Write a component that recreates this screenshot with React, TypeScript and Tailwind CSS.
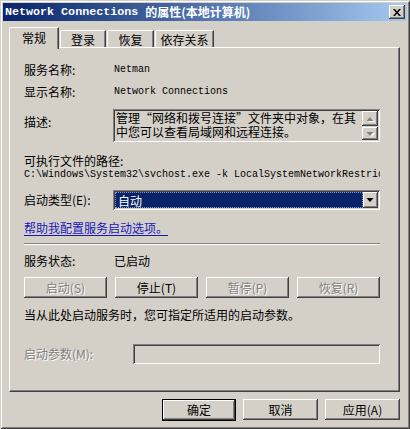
import React from "react";

const raised =
  "shadow-[inset_-1px_-1px_#404040,inset_1px_1px_#ffffff,inset_-2px_-2px_#808080,inset_2px_2px_#d4d0c8]";
const sunken =
  "shadow-[inset_1px_1px_#808080,inset_-1px_-1px_#ffffff,inset_2px_2px_#404040,inset_-2px_-2px_#d4d0c8]";
const disabledText = "text-[#808080] [text-shadow:1px_1px_0_#ffffff]";
const mono = "font-['Liberation_Mono',monospace] text-[10px]";

function Btn({
  children,
  disabled,
  w,
  isDefault,
}: {
  children: React.ReactNode;
  disabled?: boolean;
  w: string;
  isDefault?: boolean;
}) {
  if (isDefault) {
    return (
      <div className={`${w} h-[22px] border border-black flex`}>
        <div className={`flex-1 flex items-center justify-center ${raised}`}>
          <span className="text-[12px] leading-[14px]">{children}</span>
        </div>
      </div>
    );
  }
  return (
    <div className={`${w} h-[21px] flex items-center justify-center ${raised}`}>
      <span className={`text-[12px] leading-[14px] ${disabled ? disabledText : ""}`}>{children}</span>
    </div>
  );
}

function Tab({ label, selected, w }: { label: string; selected?: boolean; w: string }) {
  if (selected) {
    return (
      <div
        className={`${w} h-[22px] -mb-[2px] relative z-10 bg-[#d4d0c8] border-l border-t border-white border-r border-r-[#404040] rounded-tl-[2px] shadow-[inset_-1px_0_#808080] flex justify-center pt-[2px]`}
      >
        <span className="text-[12px] leading-[16px]">{label}</span>
      </div>
    );
  }
  return (
    <div
      className={`${w} h-[17px] bg-[#d4d0c8] border-l border-t border-white border-r border-r-[#404040] rounded-tl-[2px] shadow-[inset_-1px_0_#808080] flex justify-center pt-[1px]`}
    >
      <span className="text-[12px] leading-[16px]">{label}</span>
    </div>
  );
}

function Arrow({ up, color = "#808080", shadow }: { up?: boolean; color?: string; shadow?: boolean }) {
  return (
    <svg width="9" height="6" viewBox="0 0 9 6">
      {shadow && (
        <polygon
          points={up ? "4.5,1 8,5 1,5" : "1,1 8,1 4.5,5"}
          fill="#ffffff"
          transform="translate(1,1)"
        />
      )}
      <polygon points={up ? "4,1 7.5,5 0.5,5" : "0.5,1 7.5,1 4,5"} fill={color} />
    </svg>
  );
}

export default function App() {
  return (
    <div
      className={`w-[410px] h-[429px] bg-[#d4d0c8] text-black font-['Noto_Sans_CJK_SC','Noto_Sans',sans-serif] shadow-[inset_1px_1px_#d4d0c8,inset_-1px_-1px_#404040,inset_2px_2px_#ffffff,inset_-2px_-2px_#808080] pt-[3px] overflow-hidden`}
    >
      {/* Title bar */}
      <div className="mx-[3px] h-[18px] bg-gradient-to-r from-[#0a246a] to-[#a6caf0] flex items-center justify-between pl-[2px] pr-[2px]">
        <div className="flex items-center text-white font-bold whitespace-nowrap">
          <span className="font-['Liberation_Mono',monospace] text-[11.7px] leading-[14px] tracking-[0px]">
            Network Connections
          </span>
          <span className="text-[12px] leading-[14px] ml-[7px]">的属性(本地计算机)</span>
        </div>
        <div className={`w-[16px] h-[14px] bg-[#d4d0c8] ${raised} flex items-center justify-center`}>
          <svg width="8" height="7" viewBox="0 0 8 7">
            <path d="M0 0h2l2 2.5L6 0h2L5 3.5 8 7H6L4 4.5 2 7H0l3-3.5z" fill="#000" />
          </svg>
        </div>
      </div>

      {/* Tabs */}
      <div className="ml-[9px] mt-[6px] h-[20px] flex items-end">
        <Tab label="常规" selected w="w-[50px]" />
        <Tab label="登录" w="w-[46px] ml-[1px]" />
        <Tab label="恢复" w="w-[47px] ml-[1px]" />
        <Tab label="依存关系" w="w-[59px] ml-[1px]" />
      </div>

      {/* Panel */}
      <div className="ml-[9px] w-[391px] h-[345px] border-l border-t border-white border-r border-b border-r-[#404040] border-b-[#404040] shadow-[inset_-1px_-1px_#808080] pl-[14px] pr-[19px] pt-[14px]">
        <div className="flex h-[16px] items-center">
          <span className="w-[90px] text-[12px] leading-[16px]">服务名称:</span>
          <span className={`${mono} leading-[16px]`}>Netman</span>
        </div>
        <div className="flex h-[16px] items-center mt-[6px]">
          <span className="w-[90px] text-[12px] leading-[16px]">显示名称:</span>
          <span className={`${mono} leading-[16px]`}>Network Connections</span>
        </div>

        <div className="flex mt-[9px]">
          <span className="w-[89px] text-[12px] leading-[16px] pt-[5px]">描述:</span>
          <div className={`flex-1 h-[33px] bg-[#d4d0c8] ${sunken} flex py-[2px] pl-[2px] pr-[2px]`}>
            <div className="flex-1 flex flex-col text-[12px] leading-[14px] whitespace-nowrap pl-[1px]">
              <span>管理“网络和拨号连接”文件夹中对象，在其</span>
              <span>中您可以查看局域网和远程连接。</span>
            </div>
            <div className="w-[16px] flex flex-col">
              <div className={`h-[15px] ${raised} flex items-center justify-center`}>
                <Arrow up shadow />
              </div>
              <div className="h-[1px]" />
              <div className={`h-[13px] ${raised} flex items-center justify-center`}>
                <Arrow shadow />
              </div>
            </div>
          </div>
        </div>

        <div className="mt-[12px] h-[14px] text-[12px] leading-[14px]">可执行文件的路径:</div>
        <div className={`h-[13px] ${mono} leading-[13px] whitespace-nowrap overflow-hidden`}>
          C:\Windows\System32\svchost.exe -k LocalSystemNetworkRestricted
        </div>

        <div className="flex items-center mt-[9px]">
          <span className="w-[89px] text-[12px] leading-[16px]">启动类型(E):</span>
          <div className={`flex-1 h-[20px] bg-white ${sunken} flex p-[2px]`}>
            <div className="flex-1 bg-[#0a246a] text-white text-[12px] leading-[16px] pl-[2px] border border-dotted border-[#8a9ac8]">
              自动
            </div>
            <div className={`w-[15px] bg-[#d4d0c8] ${raised} flex items-center justify-center`}>
              <Arrow color="#000000" />
            </div>
          </div>
        </div>

        <div className="mt-[10px] h-[16px] text-[12px] leading-[16px]">
          <span className="text-[#1818c0] underline underline-offset-[2px]">帮助我配置服务启动选项。</span>
        </div>

        <div className="mt-[7px] h-[2px] border-t border-t-[#808080] border-b border-b-white" />

        <div className="flex h-[16px] items-center mt-[8px]">
          <span className="w-[90px] text-[12px] leading-[16px]">服务状态:</span>
          <span className="text-[12px] leading-[16px]">已启动</span>
        </div>

        <div className="flex gap-[8px] mt-[8px]">
          <Btn w="w-[83px]" disabled>
            启动(S)
          </Btn>
          <Btn w="w-[83px]">停止(T)</Btn>
          <Btn w="w-[83px]" disabled>
            暂停(P)
          </Btn>
          <Btn w="w-[83px]" disabled>
            恢复(R)
          </Btn>
        </div>

        <div className="mt-[9px] h-[16px] text-[12px] leading-[16px] whitespace-nowrap">
          当从此处启动服务时，您可指定所适用的启动参数。
        </div>

        <div className="flex items-center mt-[21px]">
          <span className={`w-[109px] text-[12px] leading-[16px] ${disabledText}`}>启动参数(M):</span>
          <div className={`flex-1 h-[20px] bg-[#d4d0c8] ${sunken}`} />
        </div>
      </div>

      {/* Bottom buttons */}
      <div className="ml-[9px] w-[391px] mt-[7px] flex justify-end gap-[7px]">
        <Btn w="w-[74px]" isDefault>
          确定
        </Btn>
        <Btn w="w-[75px]">取消</Btn>
        <Btn w="w-[75px]">应用(A)</Btn>
      </div>
    </div>
  );
}
